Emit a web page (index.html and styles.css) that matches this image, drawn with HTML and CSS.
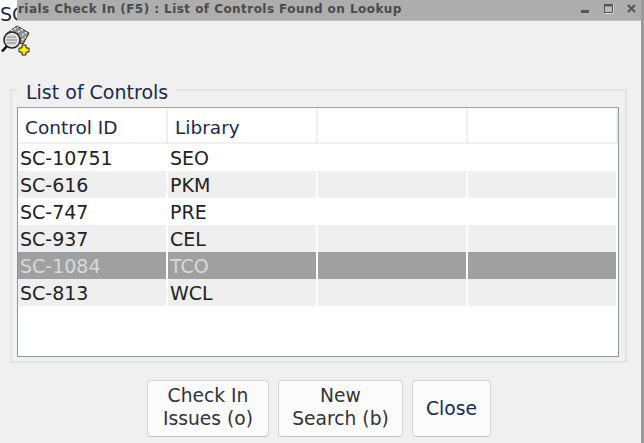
FILE: index.html
```html
<!DOCTYPE html>
<html lang="en">
<head>
<meta charset="utf-8">
<title>List of Controls Found on Lookup</title>
<link rel="stylesheet" href="styles.css">
</head>
<body>
<div class="window">
  <header class="titlebar">
    <span class="corner">SC</span>
    <div class="titlefill">
      <span class="titletext">rials Check In (F5) : List of Controls Found on Lookup</span>
      <div class="winbtns">
        <svg class="winicon" viewBox="0 0 10 10"><rect x="0" y="6" width="8" height="3" fill="#555"/></svg>
        <svg class="winicon" viewBox="0 0 10 10"><rect x="0.500" y="0.500" width="8" height="8" fill="#bbb" stroke="#555"/><rect x="0" y="0" width="9" height="2.400" fill="#555"/><path d="M9.700 0v9.500H1" stroke="#ddd" fill="none"/></svg>
        <svg class="winicon" viewBox="0 0 10 10"><path d="M1 1l7 7M8 1l-7 7" stroke="#555" stroke-width="2" fill="none"/></svg>
      </div>
    </div>
  </header>
  <main class="content">
    <div class="toolbar">
      <svg class="lookup" width="32" height="32" viewBox="0 0 32 32">
        <path d="M6 9l11-8 12 7-6 11-14-4z" fill="#8c8c8c" stroke="#222"/>
        <path d="M11 6l7-4M15 9l8-5M19 12l8-5M22 15l4-3" stroke="#eee" stroke-width="1.600" stroke-dasharray="2 1.500"/>
        <circle cx="12" cy="15" r="8" fill="#dedede" stroke="#222" stroke-width="1.500"/>
        <path d="M7 12h9M6 15h11M7 18h9" stroke="#808080" stroke-width="1.200"/>
        <path d="M7 21l-5 5.500" stroke="#111" stroke-width="2.600"/>
        <path d="M22 20h4v3h3v4h-3v3h-4v-3h-3v-4h3z" fill="#ffee00" stroke="#222"/>
      </svg>
    </div>
    <fieldset class="group">
      <legend class="legend">List of Controls</legend>
      <div class="grid">
        <div class="row head">
          <div class="cell">Control ID</div><div class="cell">Library</div><div class="cell"></div><div class="cell"></div>
        </div>
        <div class="row"><div class="cell">SC-10751</div><div class="cell">SEO</div><div class="cell"></div><div class="cell"></div></div>
        <div class="row alt"><div class="cell">SC-616</div><div class="cell">PKM</div><div class="cell"></div><div class="cell"></div></div>
        <div class="row"><div class="cell">SC-747</div><div class="cell">PRE</div><div class="cell"></div><div class="cell"></div></div>
        <div class="row alt"><div class="cell">SC-937</div><div class="cell">CEL</div><div class="cell"></div><div class="cell"></div></div>
        <div class="row selected"><div class="cell">SC-1084</div><div class="cell">TCO</div><div class="cell"></div><div class="cell"></div></div>
        <div class="row alt"><div class="cell">SC-813</div><div class="cell">WCL</div><div class="cell"></div><div class="cell"></div></div>
      </div>
    </fieldset>
    <div class="actions">
      <button class="btn wide">Check In<br>Issues (o)</button>
      <button class="btn wider">New<br>Search (b)</button>
      <button class="btn close">Close</button>
    </div>
  </main>
</div>
</body>
</html>
```
FILE: styles.css
```css
* { box-sizing: border-box; }
html, body { margin: 0; height: 100%; overflow: hidden; }
body { background: #f0f0f0; font-family: "DejaVu Sans", sans-serif; color: #222; }
.window { width: 644px; height: 443px; border-right: 3px solid #9a9a9a; display: flex; flex-direction: column; }
.titlebar { display: flex; height: 21px; background: #fff; }
.corner { width: 17px; height: 21px; overflow: hidden; font-size: 19px; line-height: 28px; color: #1b2a4a; white-space: nowrap; flex: none; }
.titlefill { flex: 1; display: flex; align-items: center; justify-content: space-between; background: #adadad; border-bottom: 1px solid #c4c4c4; padding: 0 4px 2px 1px; }
.titletext { font-weight: bold; font-size: 12px; letter-spacing: 0.45px; color: #4a4a4a; white-space: nowrap; }
.winbtns { display: flex; gap: 13px; }
.winicon { width: 10px; height: 10px; display: block; }
.content { flex: 1; display: flex; flex-direction: column; padding-left: 10px; padding-right: 14px; }
.toolbar { height: 57px; margin-left: -10px; }
.lookup { display: block; margin-top: 4px; }
.group { margin: 0; padding: 5px 6px 5px 5px; height: 285px; border: 2px solid #e4e4e4; }
.legend { padding: 4px 8px 0 9px; margin-left: 0; font-size: 19px; line-height: 20px; color: #1b2a4a; }
.grid { height: 250px; background: #fff; border: 1px solid #8f96a3; border-top-color: #a0a4ac; display: flex; flex-direction: column; }
.row { display: grid; grid-template-columns: 150px 150px 150px 1fr; height: 27px; flex: none; font-size: 19px; line-height: 29px; }
.row .cell { padding-left: 2px; border-right: 2px solid #fff; white-space: nowrap; }
.head { height: 36px; font-size: 18.500px; line-height: 40px; border-bottom: 2px solid #f0f0f0; color: #1b2a4a; }
.head .cell { padding-left: 7px; border-right: 2px solid #eee; }
.alt { background: #efefef; }
.selected { background: #a0a0a0; color: #d8d8d8; }
.actions { display: flex; gap: 9px; padding-left: 137px; margin-top: 17px; }
.btn { height: 57px; border: 1px solid #d6d6d6; border-bottom-color: #c4c4c4; border-radius: 4px; background: #fbfbfb; font: 18.700px/23px "DejaVu Sans", sans-serif; color: #333; padding: 0; }
.wide, .wider { padding-bottom: 4px; }
.wide { width: 122px; }
.wider { width: 125px; }
.close { width: 79px; color: #1b2a4a; }
```
